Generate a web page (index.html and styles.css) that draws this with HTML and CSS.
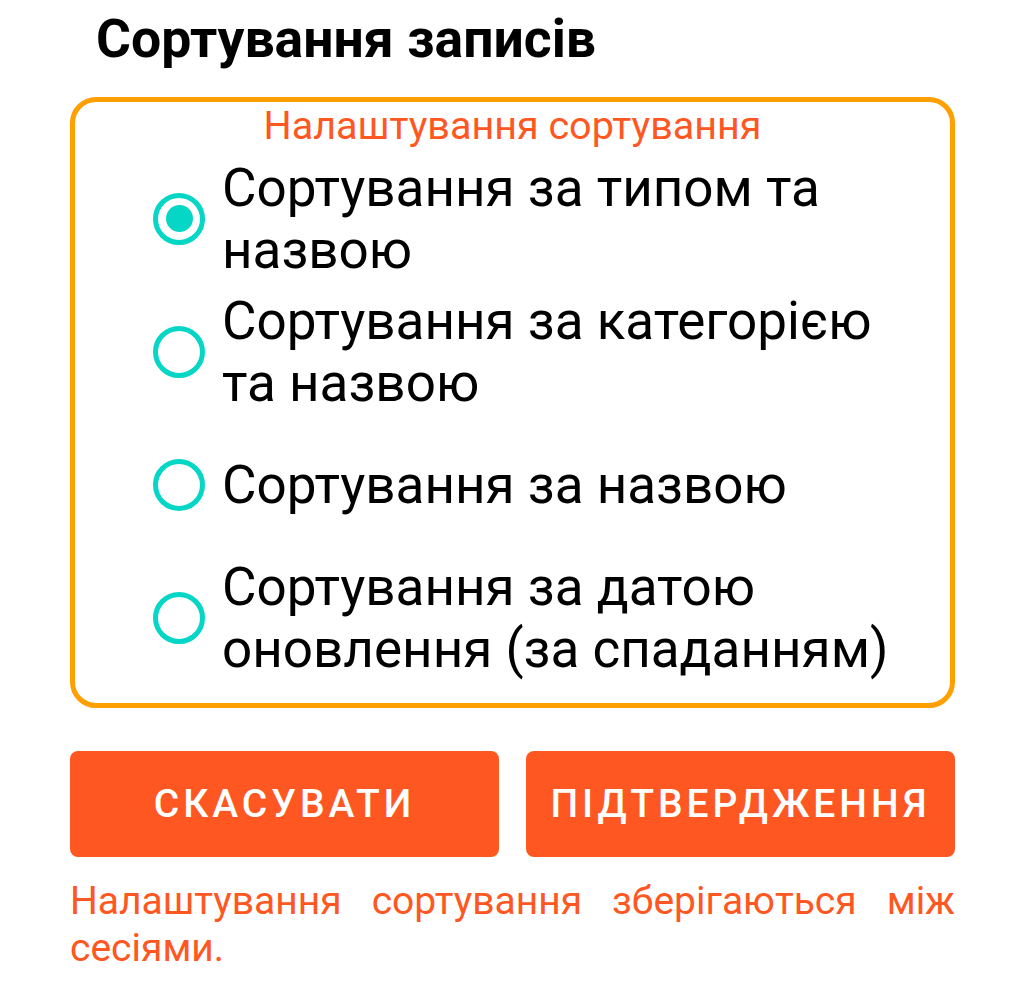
FILE: index.html
```html
<!DOCTYPE html>
<html lang="uk">
<head>
    <meta charset="UTF-8">
    <meta name="viewport" content="width=device-width, initial-scale=1.0">
    <title>Сортування записів</title>
    <link rel="stylesheet" href="styles.css">
</head>
<body>
    <div class="dialog">
        <h1 class="dialog-title">Сортування записів</h1>

        <div class="sort-box">
            <div class="sort-caption">Налаштування сортування</div>
            <div class="sort-options">
                <label class="sort-option">
                    <span class="radio checked"></span>
                    <span class="option-text">Сортування за типом та назвою</span>
                </label>
                <label class="sort-option">
                    <span class="radio"></span>
                    <span class="option-text">Сортування за категорією та назвою</span>
                </label>
                <label class="sort-option">
                    <span class="radio"></span>
                    <span class="option-text">Сортування за назвою</span>
                </label>
                <label class="sort-option">
                    <span class="radio"></span>
                    <span class="option-text">Сортування за датою оновлення (за спаданням)</span>
                </label>
            </div>
        </div>

        <div class="dialog-buttons">
            <button class="btn">Скасувати</button>
            <button class="btn">Підтвердження</button>
        </div>

        <p class="dialog-note">Налаштування сортування зберігаються між сесіями.</p>
    </div>
</body>
</html>
```

FILE: styles.css
```css
body {
    margin: 0;
    background-color: #fff;
    font-family: Roboto, "Liberation Sans", sans-serif;
    color: #000;
}

.dialog {
    width: 885px;
    margin-left: 70px;
    padding-top: 2px;
}

.dialog-title {
    margin: 0 0 21px 26px;
    font-size: 53.5px;
    font-weight: 700;
    line-height: 74px;
}

.sort-box {
    border: 5px solid #ffa000;
    border-radius: 26px;
    padding: 2px 0 19px 0;
}

.sort-caption {
    text-align: center;
    color: #ff5722;
    font-size: 39.5px;
    line-height: 44px;
    margin-bottom: 4px;
}

.sort-options {
    display: grid;
    grid-auto-rows: 133px;
}

.sort-option {
    display: flex;
    align-items: center;
    gap: 17px;
    padding-left: 78px;
    padding-right: 30px;
}

.radio {
    flex: none;
    width: 52px;
    height: 52px;
    box-sizing: border-box;
    border: 5px solid #06d6c6;
    border-radius: 50%;
    display: flex;
    justify-content: center;
    align-items: center;
}

.radio.checked::after {
    content: "";
    width: 27px;
    height: 27px;
    border-radius: 50%;
    background-color: #06d6c6;
}

.option-text {
    font-size: 53px;
    line-height: 62px;
}

.dialog-buttons {
    display: grid;
    grid-template-columns: 1fr 1fr;
    gap: 27px;
    margin-top: 43px;
}

.btn {
    height: 106px;
    border: none;
    border-radius: 8px;
    background-color: #ff5722;
    color: #fff;
    font-family: Roboto, "Liberation Sans", sans-serif;
    font-size: 39px;
    font-weight: 500;
    letter-spacing: 4px;
    text-transform: uppercase;
}

.dialog-note {
    margin: 21px 0 0 0;
    color: #ff5722;
    font-size: 39px;
    line-height: 47px;
    text-align: justify;
}
```
